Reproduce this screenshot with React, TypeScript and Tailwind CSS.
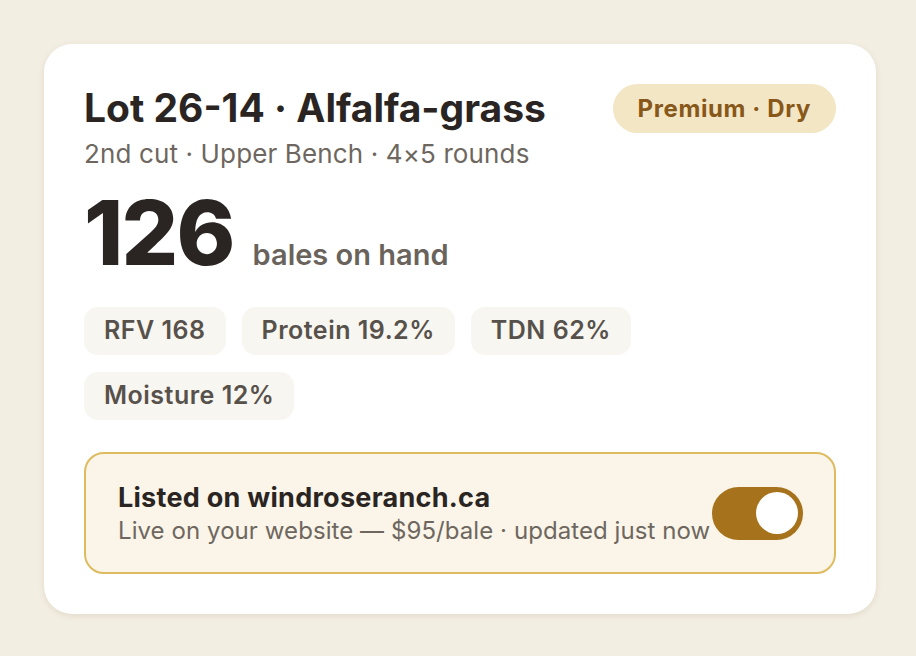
import { useState } from "react"

const stats = ["RFV 168", "Protein 19.2%", "TDN 62%", "Moisture 12%"]

export default function App() {
  const [listed, setListed] = useState(true)

  return (
    <div
      className="min-h-screen w-full bg-[#f3eee2] p-[44px] [font-optical-sizing:none] [font-variation-settings:'opsz'_14]"
      style={{ fontFamily: "Inter, 'Noto Sans', sans-serif" }}
    >
      <div className="w-[832px] rounded-[28px] bg-white px-[40px] pt-[40px] pb-[40px] shadow-[0_2px_6px_rgba(80,60,20,0.10)]">
        {/* Header */}
        <div className="flex items-start justify-between">
          <div>
            <h1 className="text-[39px] leading-[48px] font-bold text-[#2a2522]">
              Lot 26-14 · Alfalfa-grass
            </h1>
            <p className="mt-[6px] text-[26px] leading-[32px] tracking-[0.005em] text-[#6e6760]">
              2nd cut · Upper Bench · 4×5 rounds
            </p>
          </div>
          <span className="flex h-[49px] items-center rounded-full bg-[#f3e6c4] px-[25px] text-[24px] font-bold tracking-[0.025em] text-[#87581a]">
            Premium · Dry
          </span>
        </div>

        {/* Bale count */}
        <div className="mt-[13px] flex items-baseline gap-[19px]">
          <span className="text-[89px] leading-[100px] font-extrabold tracking-[-0.02em] text-[#2a2522]">
            126
          </span>
          <span className="text-[29px] font-semibold text-[#6a635c]">bales on hand</span>
        </div>

        {/* Forage analysis chips */}
        <div className="mt-[24px] flex w-[600px] flex-wrap gap-x-[16px] gap-y-[17px]">
          {stats.map((s) => (
            <span
              key={s}
              className="flex h-[48px] items-center rounded-[14px] bg-[#f8f6f0] px-[20px] text-[25px] font-semibold tracking-[0.02em] text-[#57514b]"
            >
              {s}
            </span>
          ))}
        </div>

        {/* Website listing */}
        <div className="mt-[32px] flex h-[122px] items-center justify-between rounded-[20px] border-2 border-[#dfbb60] bg-[#faf5e8] pl-[32px] pr-[31px]">
          <div>
            <div className="text-[27px] leading-[34px] font-bold tracking-[0.01em] text-[#2a2522]">
              Listed on windroseranch.ca
            </div>
            <div className="text-[24px] leading-[31px] tracking-[0.003em] text-[#6e6760]">
              Live on your website — $95/bale · updated just now
            </div>
          </div>
          <button
            onClick={() => setListed(!listed)}
            className={`flex h-[53px] w-[91px] shrink-0 items-center rounded-full px-[5px] ${
              listed ? "justify-end bg-[#a6731c]" : "justify-start bg-[#d6d0c4]"
            }`}
          >
            <span className="h-[42px] w-[42px] rounded-full bg-white" />
          </button>
        </div>
      </div>
    </div>
  )
}
